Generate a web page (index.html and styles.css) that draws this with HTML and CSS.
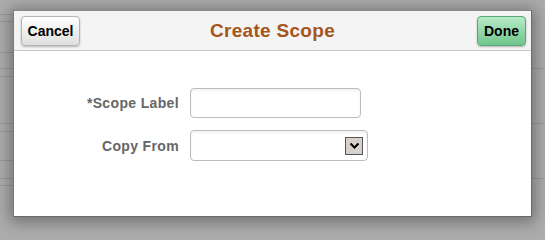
FILE: index.html
```html
<!DOCTYPE html>
<html>
<head>
<meta charset="utf-8">
<link rel="stylesheet" href="styles.css">
</head>
<body>
<div class="backdrop">
  <div class="bg-left"></div>
  <div class="bg-right"></div>
</div>
<div class="dialog">
  <div class="dialog-header">
    <div class="header-start"><button class="btn btn-cancel">Cancel</button></div>
    <h1 class="dialog-title">Create Scope</h1>
    <div class="header-end"><button class="btn btn-done">Done</button></div>
  </div>
  <div class="dialog-body">
    <div class="form-grid">
      <label class="form-label" for="scope">*Scope Label</label>
      <div class="field"><input id="scope" class="text-input" type="text"></div>
      <label class="form-label">Copy From</label>
      <div class="field">
        <div class="select-box">
          <span class="select-arrow">
            <svg width="11" height="8" viewBox="0 0 11 8"><path d="M1.5 1.5 L5.5 5.5 L9.5 1.5" fill="none" stroke="#000" stroke-width="2"/></svg>
          </span>
        </div>
      </div>
    </div>
  </div>
</div>
</body>
</html>
```
FILE: styles.css
```css
html, body {
  margin: 0;
  padding: 0;
  width: 545px;
  height: 231px;
  overflow: hidden;
  background: #acacac;
  font-family: "Liberation Sans", Arial, sans-serif;
}
.backdrop {
  display: flex;
  height: 231px;
}
.bg-left {
  width: 14px;
  background:
    linear-gradient(#989898, #989898) 0 14px / 100% 1px no-repeat,
    linear-gradient(#989898, #989898) 0 21px / 100% 1px no-repeat,
    linear-gradient(#989898, #989898) 0 52px / 100% 1px no-repeat,
    linear-gradient(#989898, #989898) 0 68px / 100% 1px no-repeat,
    linear-gradient(#989898, #989898) 0 76px / 100% 1px no-repeat,
    linear-gradient(#989898, #989898) 0 123px / 100% 1px no-repeat,
    linear-gradient(#989898, #989898) 0 131px / 100% 1px no-repeat,
    linear-gradient(#989898, #989898) 0 160px / 100% 1px no-repeat,
    linear-gradient(#989898, #989898) 0 178px / 100% 1px no-repeat,
    linear-gradient(#989898, #989898) 0 185px / 100% 1px no-repeat,
    #acacac;
}
.bg-right {
  flex: 1;
  background:
    linear-gradient(#9a9a9a, #9a9a9a) 0 68px / 100% 1px no-repeat,
    linear-gradient(#9a9a9a, #9a9a9a) 0 123px / 100% 1px no-repeat,
    linear-gradient(#9a9a9a, #9a9a9a) 0 178px / 100% 1px no-repeat,
    #acacac;
}
.dialog {
  position: absolute;
  left: 13px;
  top: 10px;
  width: 517px;
  height: 205px;
  background: #fff;
  border: 1px solid #6a6a6a;
  border-top-color: #8a8a8a;
  border-left-color: #7a7a7a;
  box-shadow: 0 2px 14px 3px rgba(0, 0, 0, 0.35);
  display: flex;
  flex-direction: column;
}
.dialog-header {
  height: 34px;
  padding: 5px 5px 0 7px;
  background: #f4f4f4;
  border-bottom: 1px solid #c8c8c8;
  display: grid;
  grid-template-columns: 1fr auto 1fr;
  align-items: start;
}
.header-start {
  display: flex;
  justify-content: flex-start;
}
.header-end {
  display: flex;
  justify-content: flex-end;
}
.dialog-title {
  margin: 0;
  padding-top: 4px;
  font-size: 19px;
  font-weight: bold;
  color: #a5551b;
  line-height: 22px;
  letter-spacing: 0.3px;
  transform: translateX(-1px);
}
.btn {
  height: 30px;
  padding: 0 5px;
  font-family: "Liberation Sans", Arial, sans-serif;
  font-size: 14px;
  font-weight: bold;
  color: #000;
  border-radius: 4px;
  box-shadow: 0 1px 2px rgba(0, 0, 0, 0.25);
}
.btn-cancel {
  width: 59px;
  border: 1px solid #b4b4b4;
  background: linear-gradient(#ffffff, #ececec 60%, #dedede);
}
.btn-done {
  width: 49px;
  border: 1px solid #58a874;
  background: linear-gradient(#b6ebc7, #8fd6a6 55%, #70c58c);
}
.dialog-body {
  flex: 1;
  padding-top: 37px;
}
.form-grid {
  display: grid;
  grid-template-columns: 165px auto;
  column-gap: 11px;
  row-gap: 12px;
  align-items: center;
}
.form-label {
  text-align: right;
  font-size: 14px;
  font-weight: bold;
  color: #666;
  letter-spacing: 0.35px;
}
.field {
  display: flex;
}
.text-input {
  box-sizing: border-box;
  width: 171px;
  height: 30px;
  margin: 0;
  border: 1px solid #bcbcbc;
  border-radius: 4px;
  box-shadow: inset 0 2px 3px rgba(0, 0, 0, 0.06);
  background: #fff;
  outline: none;
}
.select-box {
  box-sizing: border-box;
  width: 178px;
  height: 31px;
  border: 1px solid #bcbcbc;
  border-radius: 4px;
  box-shadow: inset 0 2px 3px rgba(0, 0, 0, 0.06);
  background: #fff;
  display: flex;
  align-items: center;
  justify-content: flex-end;
  padding-right: 4px;
}
.select-arrow {
  box-sizing: border-box;
  width: 18px;
  height: 18px;
  background: #d6d2cb;
  border: 1px solid #555;
  display: flex;
  align-items: center;
  justify-content: center;
}
```
